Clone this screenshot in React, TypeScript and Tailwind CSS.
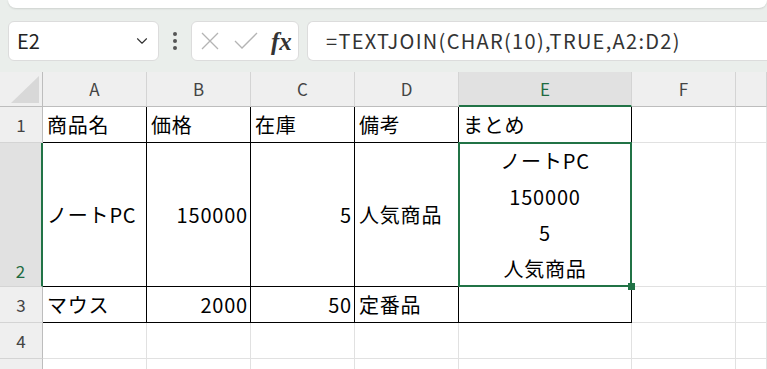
import { ChevronDown } from 'lucide-react';

const jp = "font-['Noto_Sans_CJK_JP',sans-serif]";

function ColHead({ label, active }: { label: string; active?: boolean }) {
  return (
    <div
      className={`flex items-center justify-center text-[17px] border-r border-r-[#d4d4d4] ${
        active
          ? 'bg-[#e1e1e1] text-[#1e6b41] border-b-2 border-b-[#217346]'
          : 'bg-[#efefef] text-[#444] border-b border-b-[#bdbdbd]'
      }`}
    >
      {label}
    </div>
  );
}

function RowHead({ label, active }: { label: string; active?: boolean }) {
  return (
    <div
      className={`flex justify-center text-[17px] border-b border-b-[#d4d4d4] ${
        active
          ? 'items-end pb-[3px] bg-[#e1e1e1] text-[#1e6b41] border-r-2 border-r-[#217346]'
          : 'items-center bg-[#efefef] text-[#444] border-r border-r-[#bdbdbd]'
      }`}
    >
      {label}
    </div>
  );
}

function Cell({
  text,
  right,
  table,
}: {
  text?: string;
  right?: boolean;
  table?: boolean;
}) {
  return (
    <div
      className={`flex items-center whitespace-nowrap overflow-hidden text-[20px] tracking-[0.8px] text-black border-r border-b ${
        table ? 'border-black' : 'border-[#e1e1e1]'
      } ${right ? 'justify-end pr-[2px]' : 'justify-start pl-[4px]'}`}
    >
      {text}
    </div>
  );
}

export default function App() {
  return (
    <div className={`w-[767px] h-[369px] overflow-hidden bg-[#eaeeeb] ${jp}`}>
      {/* ribbon edge */}
      <div className="ml-[8px] h-[8px] rounded-b-[8px] bg-white shadow-[0_1px_2px_rgba(0,0,0,0.12)]" />

      {/* formula bar */}
      <div className="mt-[13px] h-[40px] flex items-stretch">
        <div className="ml-[8px] w-[151px] flex items-center justify-between pl-[8px] pr-[7px] bg-white rounded-[6px] border border-[#dcdcdc]">
          <span className="text-[20px] text-[#222]">E2</span>
          <ChevronDown className="w-[18px] h-[18px] text-[#333]" strokeWidth={1.5} />
        </div>
        <div className="w-[32px] flex flex-col items-center justify-center gap-[3px]">
          <span className="w-[4px] h-[4px] rounded-full bg-[#555]" />
          <span className="w-[4px] h-[4px] rounded-full bg-[#555]" />
          <span className="w-[4px] h-[4px] rounded-full bg-[#555]" />
        </div>
        <div className="w-[108px] flex items-center bg-white rounded-[6px] border border-[#dcdcdc] pl-[8px]">
          <svg width="20" height="20" viewBox="0 0 20 20" className="text-[#b4b4b4]">
            <path d="M2 2 L18 18 M18 2 L2 18" stroke="currentColor" strokeWidth="1.3" fill="none" />
          </svg>
          <svg width="24" height="18" viewBox="0 0 24 18" className="ml-[14px] text-[#b4b4b4]">
            <path d="M1 9 L8 16 L23 1" stroke="currentColor" strokeWidth="1.3" fill="none" />
          </svg>
          <span className="ml-[13px] text-[25px] italic font-semibold text-[#333] font-['Liberation_Serif',serif] leading-none">
            fx
          </span>
        </div>
        <div className="ml-[8px] flex-1 flex items-center bg-white rounded-l-[6px] border border-r-0 border-[#dcdcdc] pl-[18px]">
          <span className="text-[20px] tracking-[1.3px] text-[#333]">=TEXTJOIN(CHAR(10),TRUE,A2:D2)</span>
        </div>
      </div>

      {/* sheet grid */}
      <div className="mt-[11px] grid grid-cols-[43px_104px_104px_104px_104px_173px_104px_1fr] grid-rows-[35px_36px_144px_36px_36px_36px] bg-white">
        {/* header row */}
        <div className="bg-[#efefef] border-r border-r-[#bdbdbd] border-b border-b-[#bdbdbd] flex items-end justify-end pr-[3px] pb-[3px]">
          <svg width="28" height="27" viewBox="0 0 28 27">
            <polygon points="28,0 28,27 0,27" fill="#d8d8d8" />
          </svg>
        </div>
        <ColHead label="A" />
        <ColHead label="B" />
        <ColHead label="C" />
        <ColHead label="D" />
        <ColHead label="E" active />
        <ColHead label="F" />
        <ColHead label="" />

        {/* row 1 */}
        <RowHead label="1" />
        <Cell text="商品名" table />
        <Cell text="価格" table />
        <Cell text="在庫" table />
        <Cell text="備考" table />
        <Cell text="まとめ" table />
        <Cell />
        <Cell />

        {/* row 2 */}
        <RowHead label="2" active />
        <Cell text="ノートPC" table />
        <Cell text="150000" right table />
        <Cell text="5" right table />
        <Cell text="人気商品" table />
        <div className="relative z-10 flex flex-col items-center justify-center text-[20px] tracking-[0.8px] leading-[36px] text-black border-r border-b border-black">
          <span>ノートPC</span>
          <span>150000</span>
          <span>5</span>
          <span>人気商品</span>
          {/* selection frame + fill handle */}
          <div className="absolute -left-[1px] -top-[1px] -right-[1px] -bottom-[1px] border-2 border-[#217346]" />
          <div className="absolute -right-[4px] -bottom-[4px] w-[7px] h-[7px] bg-[#217346]" />
        </div>
        <Cell />
        <Cell />

        {/* row 3 */}
        <RowHead label="3" />
        <Cell text="マウス" table />
        <Cell text="2000" right table />
        <Cell text="50" right table />
        <Cell text="定番品" table />
        <Cell table />
        <Cell />
        <Cell />

        {/* row 4 */}
        <RowHead label="4" />
        <Cell />
        <Cell />
        <Cell />
        <Cell />
        <Cell />
        <Cell />
        <Cell />

        {/* row 5 */}
        <RowHead label="" />
        <Cell />
        <Cell />
        <Cell />
        <Cell />
        <Cell />
        <Cell />
        <Cell />
      </div>
    </div>
  );
}
